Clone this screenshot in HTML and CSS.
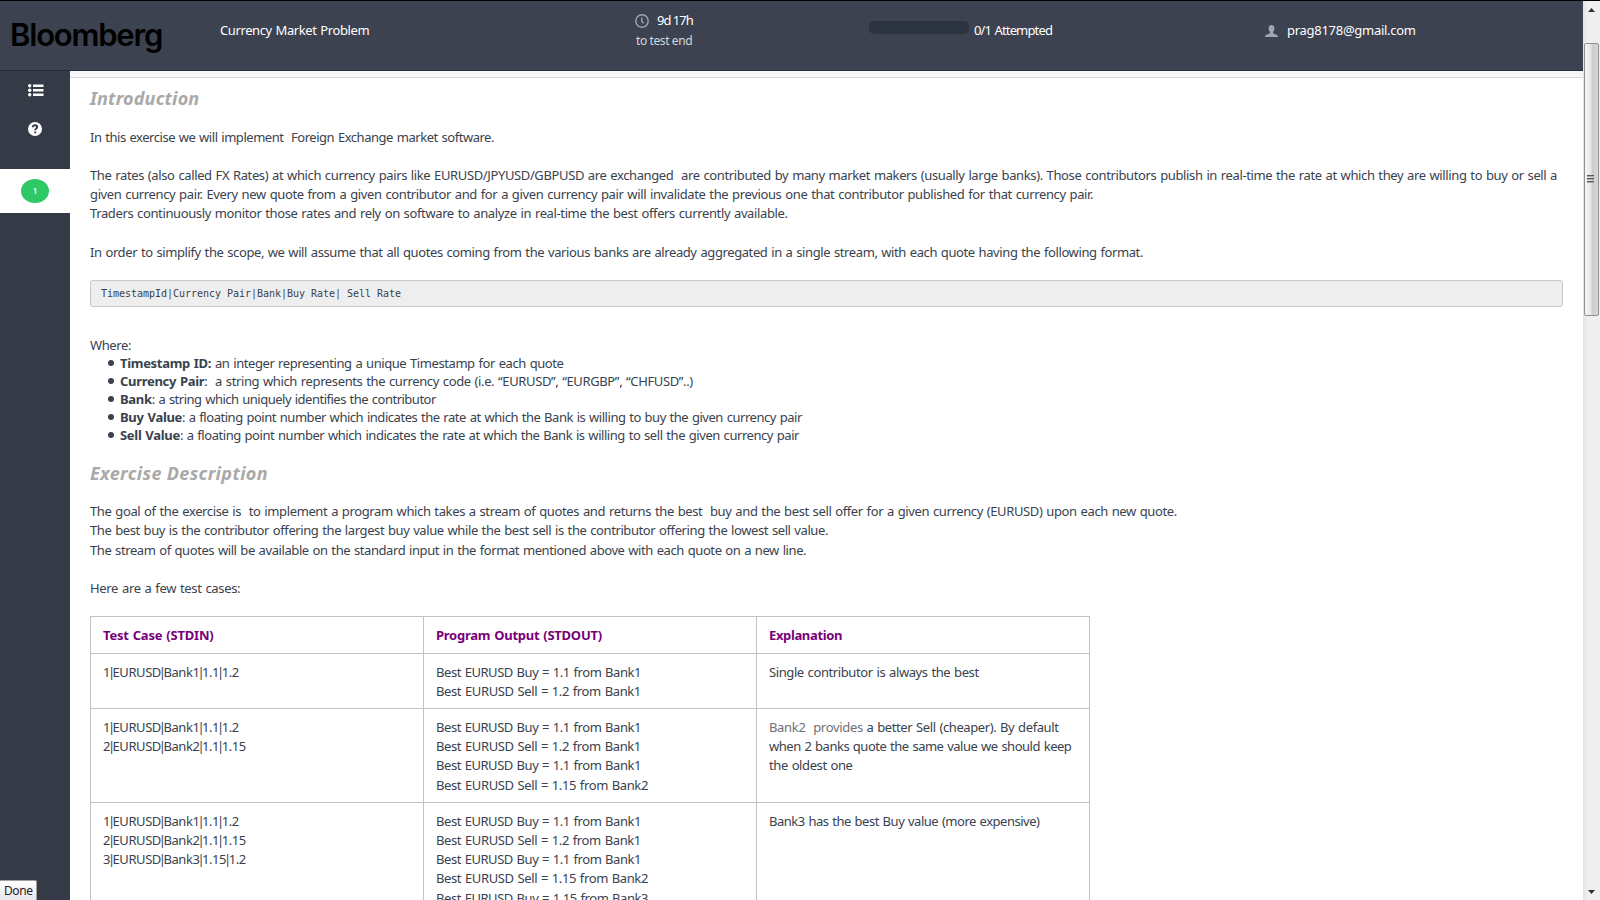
FILE: index.html
```html
<!DOCTYPE html>
<html lang="en">
<head>
<meta charset="utf-8">
<title>Currency Market Problem</title>
<link rel="stylesheet" href="styles.css">
</head>
<body>
<div class="window">
  <div class="page">
    <header class="topbar">
      <div class="logo"><span>Bloomberg</span></div>
      <div class="test-name"><span>Currency Market Problem</span></div>
      <div class="timer">
        <div class="timer-row">
          <svg class="clock" viewBox="0 0 14 14"><circle cx="7" cy="7" r="6.2"/><path d="M6.8 3.5v4l2 1.8"/></svg>
          <span class="time">9d 17h</span>
        </div>
        <div class="timer-label"><span>to test end</span></div>
      </div>
      <div class="progress"><div class="track"></div><span class="attempted">0/1 Attempted</span></div>
      <div class="user">
        <svg class="person" viewBox="0 0 13 12"><path d="M6.5 0C4.6 0 3.6 1.300 3.600 3.200c0 1.600.4 2.600 1.300 3.500v1.600C4.300 9.200 0 9.200 0 12h13c0-2.800-4.300-2.800-4.900-3.700V6.700c.9-.9 1.300-1.900 1.300-3.500C9.400 1.300 8.400 0 6.500 0z"/></svg>
        <span class="email">prag8178@gmail.com</span>
      </div>
    </header>
    <div class="body">
      <nav class="sidebar">
        <svg class="list-icon" viewBox="0 0 16 13"><path d="M5 .5h10.500v2.500H5zM5 5h10.500v2.500H5zM5 9.500h10.500v2.500H5z"/><circle cx="1.700" cy="1.800" r="1.700"/><circle cx="1.700" cy="6.300" r="1.700"/><circle cx="1.700" cy="10.800" r="1.700"/></svg>
        <svg class="help-icon" viewBox="0 0 14 14"><circle cx="7" cy="7" r="7"/><path d="M4.800 5.200C4.900 3.900 5.800 3.300 7 3.300c1.300 0 2.200.7 2.200 1.800 0 1.500-2 1.500-2 3.200M7.200 9.400v1.800"/></svg>
        <div class="question"><span class="badge">1</span></div>
      </nav>
      <main class="content">
        <div class="strip"></div>
        <div class="article">
          <h2 class="h-intro"><span>Introduction</span></h2>
          <div class="para p1">
            <div><span class="l1">In this exercise we will implement&nbsp; Foreign Exchange market software.</span></div>
          </div>
          <div class="para">
            <div><span class="l2">The rates (also called FX Rates) at which currency pairs like EURUSD/JPYUSD/GBPUSD are exchanged&nbsp; are contributed by many market makers (usually large banks). Those contributors publish in real-time the rate at which they are willing to buy or sell a</span></div>
            <div><span class="l3">given currency pair. Every new quote from a given contributor and for a given currency pair will invalidate the previous one that contributor published for that currency pair.</span></div>
            <div><span class="l4">Traders continuously monitor those rates and rely on software to analyze in real-time the best offers currently available.</span></div>
          </div>
          <div class="para">
            <div><span class="l5">In order to simplify the scope, we will assume that all quotes coming from the various banks are already aggregated in a single stream, with each quote having the following format.</span></div>
          </div>
          <pre class="code"><span>TimestampId|Currency Pair|Bank|Buy Rate| Sell Rate</span></pre>
          <div class="where"><span>Where:</span></div>
          <ul class="fields">
            <li><span class="f1"><b>Timestamp ID:</b> an integer representing a unique Timestamp for each quote</span></li>
            <li><span class="f2"><b>Currency Pair</b>:&nbsp; a string which represents the currency code (i.e. “EURUSD”, “EURGBP”, “CHFUSD”..)</span></li>
            <li><span class="f3"><b>Bank</b>: a string which uniquely identifies the contributor</span></li>
            <li><span class="f4"><b>Buy Value</b>: a floating point number which indicates the rate at which the Bank is willing to buy the given currency pair</span></li>
            <li><span class="f5"><b>Sell Value</b>: a floating point number which indicates the rate at which the Bank is willing to sell the given currency pair</span></li>
          </ul>
          <h2 class="h-desc"><span>Exercise Description</span></h2>
          <div class="para goal">
            <div><span class="d1">The goal of the exercise is&nbsp; to implement a program which takes a stream of quotes and returns the best&nbsp; buy and the best sell offer for a given currency (EURUSD) upon each new quote.</span></div>
            <div><span class="d2">The best buy is the contributor offering the largest buy value while the best sell is the contributor offering the lowest sell value.</span></div>
            <div><span class="d3">The stream of quotes will be available on the standard input in the format mentioned above with each quote on a new line.</span></div>
          </div>
          <div class="para">
            <div><span class="d4">Here are a few test cases:</span></div>
          </div>
          <table class="cases">
            <tr><th class="th1">Test Case (STDIN)</th><th class="th2">Program Output (STDOUT)</th><th class="th3">Explanation</th></tr>
            <tr>
              <td class="in">1<i>|</i>EURUSD<i>|</i>Bank1<i>|</i>1.1<i>|</i>1.2</td>
              <td class="out"><span class="buy">Best EURUSD Buy = 1.1 from Bank1</span><br>Best EURUSD Sell = 1.2 from Bank1</td>
              <td>Single contributor is always the best</td>
            </tr>
            <tr>
              <td class="in">1<i>|</i>EURUSD<i>|</i>Bank1<i>|</i>1.1<i>|</i>1.2<br>2<i>|</i>EURUSD<i>|</i>Bank2<i>|</i>1.1<i>|</i>1.15</td>
              <td class="out"><span class="buy">Best EURUSD Buy = 1.1 from Bank1</span><br>Best EURUSD Sell = 1.2 from Bank1<br><span class="buy">Best EURUSD Buy = 1.1 from Bank1</span><br>Best EURUSD Sell = 1.15 from Bank2</td>
              <td><span class="muted">Bank2&nbsp; provides</span> a better Sell (cheaper). By default<br><span class="tight">when 2 banks quote the same value we should keep</span><br>the oldest one</td>
            </tr>
            <tr>
              <td class="in">1<i>|</i>EURUSD<i>|</i>Bank1<i>|</i>1.1<i>|</i>1.2<br>2<i>|</i>EURUSD<i>|</i>Bank2<i>|</i>1.1<i>|</i>1.15<br>3<i>|</i>EURUSD<i>|</i>Bank3<i>|</i>1.15<i>|</i>1.2</td>
              <td class="out"><span class="buy">Best EURUSD Buy = 1.1 from Bank1</span><br>Best EURUSD Sell = 1.2 from Bank1<br><span class="buy">Best EURUSD Buy = 1.1 from Bank1</span><br>Best EURUSD Sell = 1.15 from Bank2<br><span class="buy">Best EURUSD Buy = 1.15 from Bank3</span></td>
              <td><span class="tight">Bank3 has the best Buy value (more expensive)</span></td>
            </tr>
          </table>
        </div>
      </main>
    </div>
  </div>
  <div class="scrollbar">
    <svg class="arrow up" viewBox="0 0 7 4"><path d="M0 4L3.500 0L7 4z"/></svg>
    <div class="thumb"><i></i><i></i><i></i></div>
    <svg class="arrow down" viewBox="0 0 7 4"><path d="M0 0L3.500 4L7 0z"/></svg>
  </div>
  <div class="status">Done</div>
</div>
</body>
</html>
```
FILE: styles.css
```css
* { box-sizing: border-box; }
body {
  margin: 0;
  width: 1600px;
  height: 900px;
  overflow: hidden;
  background: #fff;
  color: #39424e;
  font: 13px/19.1px "Noto Sans", "Open Sans", sans-serif;
  letter-spacing: -0.4px;
  word-spacing: 0.8px;
  white-space: nowrap;
}
.window {
  position: relative;
  display: flex;
  height: 900px;
  border-top: 1px solid #000;
  overflow: hidden;
}
.page { width: 1583px; display: flex; flex-direction: column; }

.topbar {
  display: flex;
  flex: none;
  height: 70px;
  background: #3c424f;
  border-bottom: 1px solid #272e3b;
  color: #fff;
}
.logo {
  width: 220px;
  padding: 14px 0 0 10px;
  font: 600 31px/40px Inter, sans-serif;
  letter-spacing: -1.2px;
  color: #000;
}
.test-name { width: 415px; padding-top: 20px; }
.timer { width: 234px; padding-top: 10px; }
.timer-row { display: flex; align-items: center; height: 19px; }
.clock { width: 14px; height: 14px; margin-right: 8px; fill: none; stroke: #a0a5ae; stroke-width: 1.4; }
.time { letter-spacing: -0.85px; word-spacing: -0.6px; }
.timer-label { padding: 1px 0 0 1px; color: #d5d7db; font-size: 12px; letter-spacing: -0.4px; word-spacing: 0; }
.progress { display: flex; width: 396px; }
.track { width: 100px; height: 13px; margin: 20px 5px 0 0; border-radius: 5px; background: #2c3442; }
.attempted { padding-top: 20px; letter-spacing: -0.85px; }
.user { display: flex; padding-top: 20px; }
.person { width: 13px; height: 12px; margin: 4px 9px 0 0; fill: #a0a5ae; }
.email { letter-spacing: -0.28px; }

.body { display: flex; flex: 1; min-height: 0; }
.sidebar {
  display: flex;
  flex-direction: column;
  align-items: center;
  width: 70px;
  background: #353b46;
}
.list-icon { width: 16px; height: 13px; margin: 13px 0 0 2px; fill: #fff; }
.help-icon { width: 14px; height: 14px; margin-top: 25px; fill: #fff; }
.help-icon path { fill: none; stroke: #353b46; stroke-width: 1.900; }
.question {
  display: flex;
  align-items: center;
  justify-content: center;
  width: 70px;
  height: 44px;
  margin-top: 33px;
  background: #fff;
}
.badge {
  width: 28px;
  height: 24px;
  border-radius: 50%;
  background: #2ec866;
  color: #fff;
  font-size: 8px;
  font-weight: 600;
  line-height: 24px;
  letter-spacing: 0;
  text-align: center;
}

.content { width: 1513px; overflow: hidden; }
.strip { height: 7px; background: #f8f6f8; border-bottom: 1px solid #d9d8da; }
.article { padding: 0 20px; }
h2 {
  margin: 0;
  color: #a9a9a9;
  font: italic bold 18px/24px "Noto Sans", sans-serif;
  word-spacing: 0;
}
.h-intro { padding-top: 8px; letter-spacing: 0.17px; }
.p1 { padding-top: 18px; }
.para { padding-bottom: 19.1px; }
.l1 { letter-spacing: -0.46px; }
.l2 { letter-spacing: -0.376px; }
.l3 { letter-spacing: -0.37px; }
.l4 { letter-spacing: -0.375px; }
.l5 { letter-spacing: -0.397px; }
.code {
  height: 27px;
  margin: -1px 0 29px;
  padding: 0 10px;
  border: 1px solid #c8c8c8;
  border-radius: 3px;
  background: #eee;
  font: 10px/25px "DejaVu Sans Mono", monospace;
  letter-spacing: -0.02px;
  word-spacing: 0;
}
.where { line-height: 18px; }
.fields { margin: 0; padding: 0 0 0 18px; line-height: 18px; list-style: none; }
.fields li { display: flex; align-items: center; }
.fields li::before {
  content: "";
  width: 6px;
  height: 6px;
  margin-right: 6px;
  border-radius: 50%;
  background: #39424e;
}
.fields b { letter-spacing: -0.3px; }
.f1 { letter-spacing: -0.42px; }
.f2 { letter-spacing: -0.375px; }
.f3 { letter-spacing: -0.5px; }
.f4 { letter-spacing: -0.463px; }
.f5 { letter-spacing: -0.443px; }
.h-desc { margin: 17px 0 17px; letter-spacing: 0.35px; }
.goal { line-height: 19.5px; }
.d1 { letter-spacing: -0.376px; }
.d2 { letter-spacing: -0.404px; }
.d3 { letter-spacing: -0.413px; }
.d4 { letter-spacing: -0.33px; }
.cases {
  width: 1000px;
  margin-top: -2px;
  border-collapse: collapse;
  table-layout: fixed;
}
th, td {
  padding: 9px 12px 7px;
  border: 1px solid #c2c3c8;
  vertical-align: top;
  text-align: left;
  line-height: 19.2px;
}
th { padding: 9.500px 12px 7.500px; color: #780078; line-height: 19px; }
.th1 { letter-spacing: -0.2px; }
.th2 { letter-spacing: -0.25px; }
.th3 { letter-spacing: -0.36px; }
.in i { margin: 0 -2.100px; font-style: normal; }
.in { letter-spacing: -0.43px; }
.out { letter-spacing: -0.38px; }
.buy { letter-spacing: -0.45px; }
.tight { letter-spacing: -0.48px; }
.muted { color: #707070; letter-spacing: -0.33px; }

.scrollbar {
  display: flex;
  flex-direction: column;
  align-items: center;
  width: 17px;
  background: linear-gradient(90deg, #e4e4e4, #f0f0f0 30%, #efefef);
}
.arrow { width: 7px; height: 4px; fill: #333; }
.up { margin-top: 7px; }
.down { margin: auto 0 6px; }
.thumb {
  display: flex;
  flex-direction: column;
  align-items: center;
  justify-content: center;
  gap: 1px;
  width: 15px;
  height: 273px;
  margin-top: 31px;
  padding: 0 2px 2px 0;
  border: 1px solid #909090;
  border-radius: 2px;
  background: linear-gradient(90deg, #f6f6f6, #e6e6e8 45%, #cbccd0 55%, #d8d8dc);
}
.thumb i { width: 7px; height: 2px; background: #555; border-bottom: 1px solid #aaa; }
.status {
  position: absolute;
  left: 0;
  bottom: 0;
  width: 37px;
  height: 20px;
  padding-left: 4px;
  border: solid #a0a0a0;
  border-width: 1px 1px 0 0;
  border-radius: 0 2px 0 0;
  background: linear-gradient(#fff, #e6e6ec);
  color: #222;
  font-size: 12px;
  line-height: 20px;
  letter-spacing: -0.4px;
}
```
